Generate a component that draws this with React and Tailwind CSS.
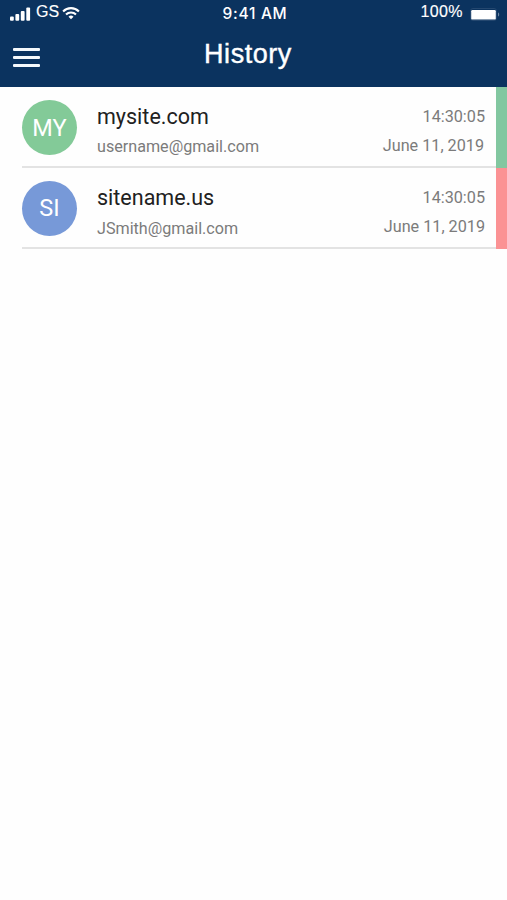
const entries = [
  {
    id: 1,
    initials: 'MY',
    site: 'mysite.com',
    user: 'username@gmail.com',
    time: '14:30:05',
    date: 'June 11, 2019',
    avatar: 'bg-[#83ca98] pt-[3px]',
    status: 'bg-[#82c7a0]',
    userOffset: 'mt-[6px]',
    dateOffset: 'mr-[1px]',
  },
  {
    id: 2,
    initials: 'SI',
    site: 'sitename.us',
    user: 'JSmith@gmail.com',
    time: '14:30:05',
    date: 'June 11, 2019',
    avatar: 'bg-[#7799d8] pt-[1px]',
    status: 'bg-[#fb9294]',
    userOffset: 'mt-[7px]',
    dateOffset: '',
  },
]

const SignalIcon = () => (
  <svg width="21" height="14" viewBox="0 0 21 14" fill="currentColor">
    <rect x="0" y="9.5" width="3.8" height="4.3" rx="1" />
    <rect x="5.4" y="7" width="3.8" height="6.8" rx="1" />
    <rect x="10.8" y="4" width="3.8" height="9.8" rx="1" />
    <rect x="16.3" y="0.5" width="3.8" height="13.3" rx="1" />
  </svg>
)

const WifiIcon = () => (
  <svg width="18" height="14" viewBox="0 0 18 14" fill="none" stroke="currentColor" strokeWidth="2.1">
    <path d="M1.1 5.4a11.2 11.2 0 0 1 15.8 0" />
    <path d="M4 8.5a7.1 7.1 0 0 1 10 0" />
    <path d="M9 13.2 6.5 10.7a3.6 3.6 0 0 1 5 0z" fill="currentColor" stroke="none" />
  </svg>
)

const BatteryIcon = () => (
  <svg width="31" height="13" viewBox="0 0 31 13" fill="none">
    <rect x="0.5" y="0.5" width="26" height="12" rx="2.5" stroke="#24476f" />
    <rect x="1.2" y="2" width="24.6" height="9.6" rx="1.2" fill="#fff" />
    <path d="M28 4.5v4c1.6-.4 1.6-3.6 0-4z" fill="#6f87a5" />
  </svg>
)

const StatusBar = () => (
  <div className="grid h-7 grid-cols-[1fr_auto_1fr] items-start text-white">
    <div className="flex items-start pl-[10px]">
      <div className="pt-[7px]"><SignalIcon /></div>
      <span className="ml-[5px] mt-[2px] font-['Liberation_Sans'] text-[16px] leading-[20px] [-webkit-text-stroke:0.15px_white]">GS</span>
      <div className="ml-[3px] pt-[6px]"><WifiIcon /></div>
    </div>
    <span className="ml-[3px] mt-[4px] font-['Inter'] text-[15.5px] font-medium leading-[20px] tracking-[0.7px]">9:41 AM</span>
    <div className="flex items-start justify-end pr-[6px]">
      <span className="mt-[2px] font-['Liberation_Sans'] text-[16px] leading-[20px] tracking-[0.4px] [-webkit-text-stroke:0.15px_white]">100%</span>
      <div className="ml-[7px] pt-[8px]"><BatteryIcon /></div>
    </div>
  </div>
)

const Header = () => (
  <header className="h-[87px] bg-[#0b335f]">
    <StatusBar />
    <div className="grid h-[59px] grid-cols-[1fr_auto_1fr] items-start text-white">
      <button className="ml-[13px] mt-5 flex w-[27px] flex-col gap-[5px]" aria-label="Menu">
        <span className="h-[3px] w-full rounded-[1px] bg-[#f5f9fc]" />
        <span className="h-[3px] w-full rounded-[1px] bg-[#f5f9fc]" />
        <span className="h-[3px] w-full rounded-[1px] bg-[#f5f9fc]" />
      </button>
      <h1 className="mr-[11px] mt-[10px] font-['Liberation_Sans'] text-[27px] leading-8 tracking-[0.55px] [-webkit-text-stroke:0.4px_white]">History</h1>
    </div>
  </header>
)

const HistoryRow = ({ entry }) => (
  <li className="flex h-[81px]">
    <div className="ml-[22px] flex flex-1 border-b-2 border-[#e3e3e3]">
      <div className={`mt-[13px] flex size-[55px] items-center justify-center rounded-full text-[23.5px] text-white ${entry.avatar}`}>
        {entry.initials}
      </div>
      <div className="ml-5 mt-[17px]">
        <p className="text-[21.5px] leading-[26px] text-[#212121]">{entry.site}</p>
        <p className={`text-[16.15px] leading-[22px] text-[#7b7b7b] ${entry.userOffset}`}>{entry.user}</p>
      </div>
      <div className="ml-auto mr-[11px] mt-[19px] text-right text-[16.2px] leading-[22px] text-[#7b7b7b]">
        <p>{entry.time}</p>
        <p className={`mt-[7px] ${entry.dateOffset}`}>{entry.date}</p>
      </div>
    </div>
    <div className={`w-[11px] ${entry.status}`} />
  </li>
)

const App = () => {
  return (
    <div className="min-h-screen bg-[#fefefe] font-['Roboto',sans-serif]">
      <Header />
      <ul>
        {entries.map((entry) => (
          <HistoryRow key={entry.id} entry={entry} />
        ))}
      </ul>
    </div>
  )
}

export default App
